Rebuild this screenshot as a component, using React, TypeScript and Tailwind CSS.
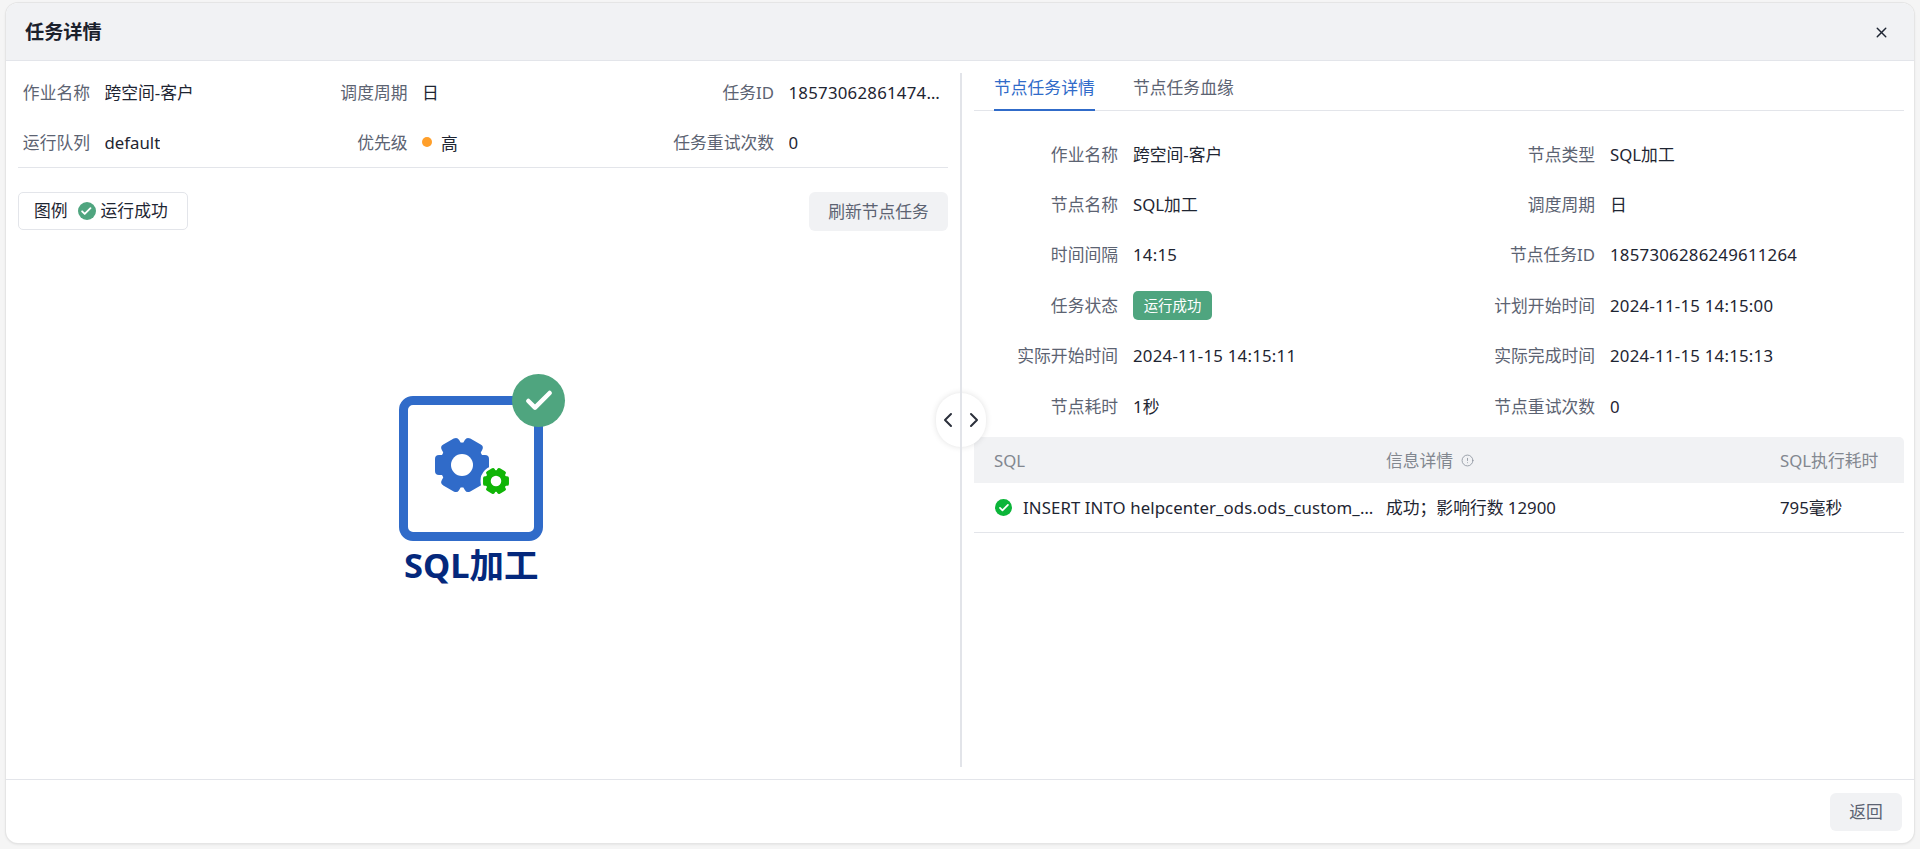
import { Check, ChevronLeft, ChevronRight, CircleAlert, X } from "lucide-react";

const fontStack = "font-['Noto_Sans','Noto_Sans_CJK_SC',sans-serif]";

const taskInfo = [
  { label: "作业名称", value: "跨空间-客户" },
  { label: "调度周期", value: "日" },
  { label: "任务ID", value: "185730628614746112" },
  { label: "运行队列", value: "default" },
  { label: "优先级", value: "高", priority: true },
  { label: "任务重试次数", value: "0" },
];

const nodeInfo = [
  { label: "作业名称", value: "跨空间-客户" },
  { label: "节点类型", value: "SQL加工" },
  { label: "节点名称", value: "SQL加工" },
  { label: "调度周期", value: "日" },
  { label: "时间间隔", value: "14:15" },
  { label: "节点任务ID", value: "1857306286249611264" },
  { label: "任务状态", value: "运行成功", tag: true },
  { label: "计划开始时间", value: "2024-11-15 14:15:00" },
  { label: "实际开始时间", value: "2024-11-15 14:15:11" },
  { label: "实际完成时间", value: "2024-11-15 14:15:13" },
  { label: "节点耗时", value: "1秒" },
  { label: "节点重试次数", value: "0" },
];

function StatusDot({ color, size }: { color: string; size: string }) {
  return (
    <span className={`flex shrink-0 items-center justify-center rounded-full ${color} ${size}`}>
      <Check className="h-[70%] w-[70%] text-white" strokeWidth={3.5} />
    </span>
  );
}

function Gear({ cx, cy, scale, color }: { cx: number; cy: number; scale: number; color: string }) {
  return (
    <g transform={`translate(${cx} ${cy}) scale(${scale})`} fill={color}>
      <circle r="22.5" />
      <rect x="-27" y="-10" width="54" height="20" rx="4" />
      <rect x="-27" y="-10" width="54" height="20" rx="4" transform="rotate(60)" />
      <rect x="-27" y="-10" width="54" height="20" rx="4" transform="rotate(120)" />
      <circle r="11" fill="#fff" />
    </g>
  );
}

function SqlNode() {
  return (
    <div className="flex w-[166px] flex-col items-start">
      <div className="relative">
        <div className="mt-[22px] h-[145px] w-[144px] rounded-[14px] border-[9px] border-[#306bc9] bg-white">
          <svg width="126" height="127" viewBox="0 0 126 127" className="block">
            <Gear cx={54} cy={60} scale={1} color="#306bc9" />
            <circle cx={88} cy={76} r={15.5} fill="#fff" />
            <Gear cx={88} cy={76} scale={0.48} color="#10b507" />
          </svg>
        </div>
        <div className="absolute top-0 left-[113px] flex h-[53px] w-[53px] items-center justify-center rounded-full bg-[#4fa57f]">
          <Check className="h-[32px] w-[32px] text-white" strokeWidth={3.4} />
        </div>
      </div>
      <div className="mt-[2px] ml-[5px] text-[34.5px] leading-[44px] font-bold whitespace-nowrap text-[#04287c]">SQL加工</div>
    </div>
  );
}

export default function App() {
  return (
    <div className={`h-[849px] w-[1920px] overflow-hidden bg-[#f5f5f5] pt-[3px] pl-[6px] text-[16.8px] text-[#1e2532] ${fontStack}`}>
      <div className="flex h-[840px] w-[1908px] flex-col overflow-hidden rounded-[12px] bg-white shadow-[0_0_0_1px_#e5e5e5,0_1px_3px_rgba(0,0,0,0.12)]">
        {/* Header */}
        <div className="flex h-[58px] shrink-0 items-center justify-between border-b border-[#e3e5ea] bg-[#f1f2f4] pt-[2px] pr-[24px] pl-[19px]">
          <span className="text-[19.2px] font-bold text-[#1b212c]">任务详情</span>
          <X className="h-[17px] w-[17px] text-[#1e2532]" strokeWidth={2} />
        </div>

        {/* Body */}
        <div className="relative flex min-h-0 flex-1">
          {/* Left pane */}
          <div className="flex w-[954px] shrink-0 flex-col pt-[7px] pl-[12px]">
            <div className="grid w-[930px] grid-cols-[72px_216.5px_72px_237.5px_100px_1fr] gap-x-[14.5px] border-b border-[#e3e5ea]">
              {taskInfo.map(item => (
                <div key={item.label} className="contents">
                  <div className="flex h-[49.5px] items-center justify-end whitespace-nowrap text-[#5c6372]">{item.label}</div>
                  <div className="flex h-[49.5px] min-w-0 items-center">
                    {item.priority && <span className="mr-[9px] h-[10px] w-[10px] rounded-full bg-[#ff9f2a]" />}
                    <span className={`truncate ${item.priority ? "pt-[2px]" : ""} ${/^\d/.test(item.value) ? "tracking-[0.25px]" : ""}`}>
                      {item.value}
                    </span>
                  </div>
                </div>
              ))}
            </div>

            <div className="mt-[24px] flex w-[930px] items-start justify-between">
              <div className="flex h-[38px] w-[170px] items-center rounded-[5px] border border-[#e3e5ea] pl-[15px]">
                <span>图例</span>
                <StatusDot color="bg-[#4fa57f]" size="ml-[10px] mr-[5px] h-[18px] w-[18px]" />
                <span>运行成功</span>
              </div>
              <button className="h-[39px] w-[139px] rounded-[6px] bg-[#f1f2f4] text-[#5c6372]">刷新节点任务</button>
            </div>

            <div className="flex w-[930px] justify-center pt-[143px] pr-[2px]">
              <SqlNode />
            </div>
          </div>

          {/* Divider */}
          <div className="relative z-[2] my-[12px] w-[2px] shrink-0 bg-[#e2e4e9]" />

          {/* Right pane */}
          <div className="flex min-w-0 flex-1 flex-col pt-[12px] pl-[12px]">
            <div className="flex h-[38px] w-[930px] gap-[38px] border-b border-[#e3e5ea] pl-[20px]">
              <div className="h-[38px] w-[101px] border-b-2 border-[#306bc9] pt-[2px] whitespace-nowrap text-[#306bc9]">节点任务详情</div>
              <div className="pt-[2px] whitespace-nowrap text-[#5c6372]">节点任务血缘</div>
            </div>

            <div className="mt-[18px] grid grid-cols-[144px_317px_130px_1fr] gap-x-[15px]">
              {nodeInfo.map(item => (
                <div key={item.label} className="contents">
                  <div className="flex h-[50.4px] items-center justify-end whitespace-nowrap text-[#5c6372]">{item.label}</div>
                  <div className={`flex h-[50.4px] items-center ${/^\d/.test(item.value) ? "tracking-[0.25px]" : ""}`}>
                    {item.tag ? (
                      <span className="flex h-[29px] w-[79px] items-center justify-center rounded-[5px] bg-[#4fa57f] text-[14.4px] text-white">
                        {item.value}
                      </span>
                    ) : (
                      item.value
                    )}
                  </div>
                </div>
              ))}
            </div>

            {/* SQL table */}
            <div className="mt-[6px] w-[930px]">
              <div className="grid h-[46px] grid-cols-[402px_394px_134px] items-center rounded-t-[5px] bg-[#f1f2f4] text-[#82878f]">
                <div className="pl-[20px]">SQL</div>
                <div className="flex items-center gap-[8px] pl-[10px]">
                  信息详情
                  <CircleAlert className="h-[13px] w-[13px] text-[#8f95a0]" strokeWidth={1.6} />
                </div>
                <div className="pl-[10px]">SQL执行耗时</div>
              </div>
              <div className="grid h-[50px] grid-cols-[402px_394px_134px] items-center border-b border-[#e3e5ea]">
                <div className="flex min-w-0 items-center pl-[21px]">
                  <StatusDot color="bg-[#0bb539]" size="mr-[11px] h-[17px] w-[17px]" />
                  <span className="truncate tracking-[0.1px]">INSERT INTO helpcenter_ods.ods_custom_info_full</span>
                </div>
                <div className="pl-[10px]">成功；影响行数 12900</div>
                <div className="pl-[10px]">795毫秒</div>
              </div>
            </div>
          </div>

          {/* Collapse handle */}
          <div className="absolute top-[332px] left-[930px] z-[1] flex h-[54px] w-[50px] items-center justify-between rounded-full bg-white shadow-[0_0_6px_rgba(0,0,0,0.12)]">
            <ChevronLeft className="h-[24px] w-[24px] text-[#2b303b]" strokeWidth={2} />
            <ChevronRight className="h-[24px] w-[24px] text-[#2b303b]" strokeWidth={2} />
          </div>
        </div>

        {/* Footer */}
        <div className="flex h-[64px] shrink-0 items-center justify-end border-t border-[#e3e5ea] pr-[12px]">
          <button className="h-[38px] w-[72px] rounded-[6px] bg-[#f1f2f4] text-[#5c6372]">返回</button>
        </div>
      </div>
    </div>
  );
}
